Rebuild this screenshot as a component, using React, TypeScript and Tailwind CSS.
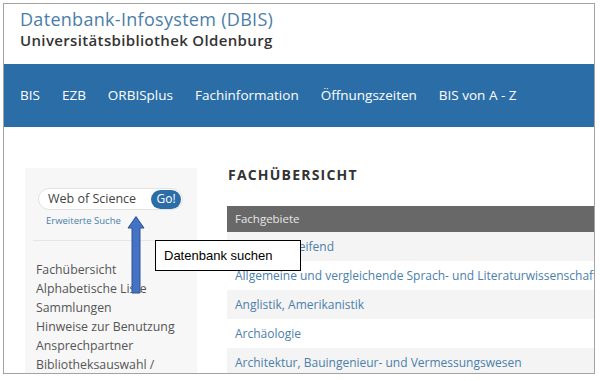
import React from 'react';

const navItems = ['BIS', 'EZB', 'ORBISplus', 'Fachinformation', 'Öffnungszeiten', 'BIS von A - Z'];

const sideLinks = [
    'Fachübersicht',
    'Alphabetische Liste',
    'Sammlungen',
    'Hinweise zur Benutzung',
    'Ansprechpartner',
    'Bibliotheksauswahl /',
    'Einstellungen',
];

const subjects = [
    'Fachübergreifend',
    'Allgemeine und vergleichende Sprach- und Literaturwissenschaft',
    'Anglistik, Amerikanistik',
    'Archäologie',
    'Architektur, Bauingenieur- und Vermessungswesen',
];

const font = { fontFamily: '"Open Sans", "Noto Sans", sans-serif' };

export default function App() {
    return (
        <div className="w-[600px] h-[381px] bg-white overflow-hidden" style={font}>
            <div className="relative ml-[3px] mt-[3px] w-[592px] h-[371px] border border-[#a3a3a3] overflow-hidden">
                {/* site header */}
                <div className="h-[60px] pl-[16px] pt-[4px]">
                    <div className="text-[18px] leading-[22px] text-[#4a7ea8] tracking-[0.3px]">
                        Datenbank-Infosystem (DBIS)
                    </div>
                    <div className="text-[15px] leading-[20px] text-[#333] font-semibold tracking-[0.35px]">
                        Universitätsbibliothek Oldenburg
                    </div>
                </div>

                {/* main navigation */}
                <nav className="h-[63px] bg-[#2b6ea7] flex items-center pl-[16px] gap-[22px]">
                    {navItems.map((item) => (
                        <span key={item} className="text-white text-[13.5px] whitespace-nowrap">
                            {item}
                        </span>
                    ))}
                </nav>

                <div className="flex items-start">
                    {/* sidebar */}
                    <aside className="ml-[21px] mt-[41px] w-[172px] h-[220px] bg-[#f7f7f7] pt-[20px] shrink-0">
                        <div className="ml-[13px] w-[145px] h-[22px] bg-white border border-[#e3e3e3] rounded-full flex items-center justify-between pl-[9px] pr-px">
                            <span className="text-[12.5px] text-[#444]">Web of Science</span>
                            <span className="h-[19px] w-[30px] rounded-full bg-[#2b6ea7] text-white text-[12px] flex items-center justify-center">
                                Go!
                            </span>
                        </div>
                        <div className="ml-[21px] mt-[4px] text-[9.5px] text-[#4a80ab]">Erweiterte Suche</div>
                        <div className="mt-[12px] ml-[8px] mr-[4px] border-t border-[#e6e6e6]" />
                        <ul className="mt-[19px] ml-[11px]">
                            {sideLinks.map((link) => (
                                <li key={link} className="text-[12.3px] leading-[19px] text-[#555] whitespace-nowrap">
                                    {link}
                                </li>
                            ))}
                        </ul>
                    </aside>

                    {/* content */}
                    <main className="ml-[30px] mt-[38px] flex-1 min-w-0">
                        <h1 className="text-[14px] leading-[20px] font-bold tracking-[1.2px] text-[#333] pl-px">
                            FACHÜBERSICHT
                        </h1>
                        <div className="mt-[21px] h-[26px] bg-[#686868] flex items-center pl-[8px] text-[11.5px] text-[#e6e6e6]">
                            Fachgebiete
                        </div>
                        {subjects.map((s, i) => (
                            <div
                                key={s}
                                className={`h-[29px] flex items-center pl-[8px] text-[12px] text-[#4a80ab] whitespace-nowrap ${
                                    i % 2 === 0 ? 'bg-[#f4f4f4]' : 'bg-white'
                                }`}
                            >
                                {s}
                            </div>
                        ))}
                    </main>
                </div>

                {/* annotation: arrow pointing at search field */}
                <svg className="absolute left-[123px] top-[212px]" width="18" height="78" viewBox="0 0 18 78">
                    <polygon
                        points="9,0.5 17,12 13,12 13,77 5,77 5,12 1,12"
                        fill="#4472c4"
                        stroke="#2f528f"
                        strokeWidth="1"
                    />
                </svg>
                <div
                    className="absolute left-[151px] top-[236px] w-[146px] h-[31px] bg-white border border-black flex items-center pl-[8px] text-[13px] text-black"
                    style={{ fontFamily: '"Liberation Sans", Arial, sans-serif' }}
                >
                    Datenbank suchen
                </div>
            </div>
        </div>
    );
}
